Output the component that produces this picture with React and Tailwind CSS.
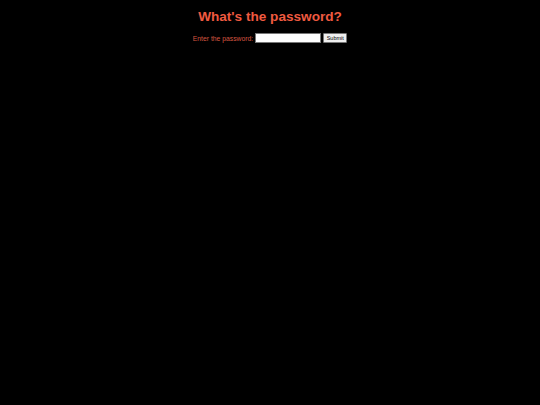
export default function App() {
    return (
        <main className="min-h-[405px] w-full bg-black pt-[8px] text-center font-['Liberation_Sans',Arial,sans-serif]">
            <h1 className="text-[13.6px] font-bold leading-[18px] text-[#ef5a40]">What's the password?</h1>
            <form className="mt-[7px] flex items-center justify-center gap-[2px]" onSubmit={(e) => e.preventDefault()}>
                <label className="text-[6.8px] leading-[9px] text-[#d65640]">Enter the password:</label>
                <input type="password" className="h-[10px] w-[66px] border border-[#767676] bg-white" />
                <button type="submit" className="h-[10px] w-[24px] rounded-[1px] border border-[#767676] bg-[#efefef] text-[5.5px] leading-[8px] text-black">
                    Submit
                </button>
            </form>
        </main>
    )
}
